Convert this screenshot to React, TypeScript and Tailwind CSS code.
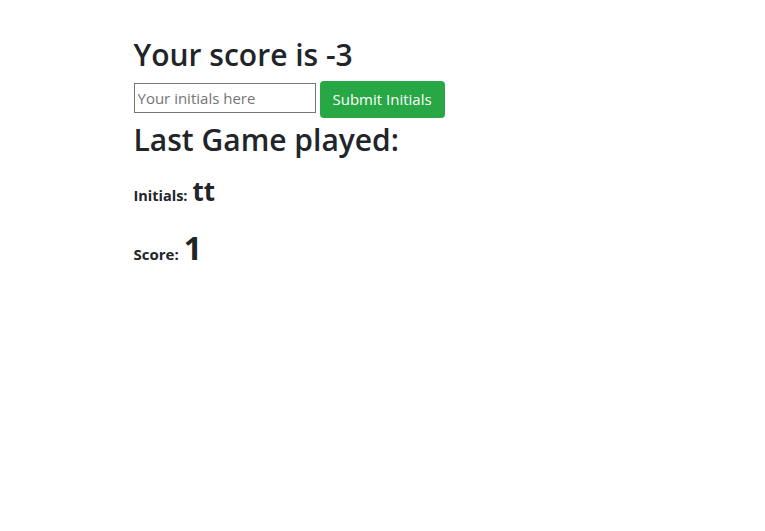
export default function App() {
  const score = -3;
  const last = { initials: "tt", score: 1 };

  return (
    <div className="min-h-screen bg-white text-[#212529] font-['Open_Sans',sans-serif]">
      <div className="mx-auto w-[540px] px-[21px] pt-[37px]">
        <h2 className="text-[30px] font-semibold leading-[1.2] mb-[8px]">Your score is {score}</h2>

        <form className="flex items-start gap-[4px]" onSubmit={(e) => e.preventDefault()}>
          <input
            type="text"
            placeholder="Your initials here"
            className="mt-[2px] h-[30px] w-[182px] border border-[#767676] px-[3px] text-[15px] placeholder:text-[#757575] outline-none"
          />
          <button
            type="submit"
            className="h-[37px] rounded-[4px] bg-[#28a745] px-[13px] text-[15px] text-white"
          >
            Submit Initials
          </button>
        </form>

        <h2 className="text-[30px] font-semibold leading-[1.2] mt-[4px]">Last Game played:</h2>

        <div className="mt-[14px] flex items-baseline gap-[5px]">
          <span className="text-[14.5px] font-bold">Initials:</span>
          <span className="text-[26px] font-bold">{last.initials}</span>
        </div>
        <div className="mt-[13px] flex items-baseline gap-[5px]">
          <span className="text-[15px] font-bold">Score:</span>
          <span className="text-[32px] font-bold">{last.score}</span>
        </div>
      </div>
    </div>
  );
}
